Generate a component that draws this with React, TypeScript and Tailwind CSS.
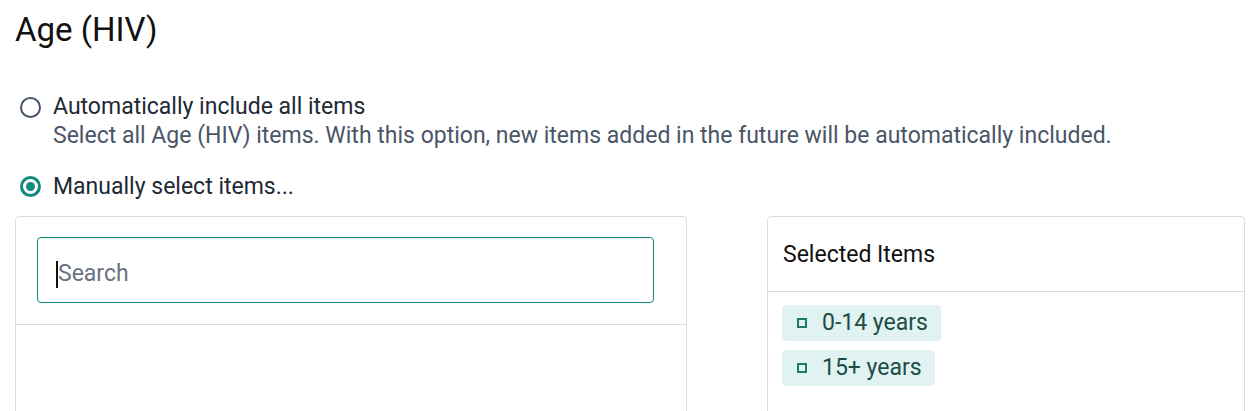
export default function App() {
  const font = { fontFamily: 'Roboto, "Liberation Sans", sans-serif' };
  return (
    <div className="bg-white min-h-screen pl-[15px] pr-[8px] text-[#1a1a1a]" style={font}>
      {/* title */}
      <h1 className="pt-[10px] text-[33px] leading-[40px] font-normal text-[#111]">Age (HIV)</h1>

      {/* options */}
      <div className="mt-[42px] pl-[5px]">
        <label className="flex items-start gap-[12px]">
          <span className="mt-[5px] w-[21px] h-[21px] rounded-full border-2 border-[#475569] bg-white shrink-0" />
          <span className="flex flex-col">
            <span className="text-[23px] leading-[29px] text-[#212934]">Automatically include all items</span>
            <span className="text-[23px] leading-[29px] text-[#4a5568]">
              Select all Age (HIV) items. With this option, new items added in the future will be automatically included.
            </span>
          </span>
        </label>
        <label className="flex items-center gap-[12px] mt-[22px]">
          <span className="w-[21px] h-[21px] rounded-full border-[3px] border-[#138a7e] flex items-center justify-center shrink-0">
            <span className="w-[9px] h-[9px] rounded-full bg-[#138a7e]" />
          </span>
          <span className="text-[23px] leading-[29px] text-[#212934]">Manually select items...</span>
        </label>
      </div>

      {/* transfer panels */}
      <div className="mt-[15px] flex gap-[80px]">
        <div className="w-[672px] shrink-0 h-[220px] border border-[#d5dde5] rounded-[4px] flex flex-col">
          <div className="pl-[21px] pr-[32px] pt-[20px] pb-[21px] border-b border-[#d5dde5]">
            <div className="h-[66px] border border-[#138a7e] rounded-[4px] flex items-center pl-[18px] pr-[13px] pt-[8px] shadow-[inset_0_1px_2px_rgba(0,0,0,0.08)]">
              <span className="w-[2px] h-[27px] bg-[#111]" />
              <input
                className="flex-1 outline-none text-[23px] text-[#1a1a1a] placeholder:text-[#6b7280] bg-transparent"
                placeholder="Search"
                style={font}
              />
            </div>
          </div>
        </div>

        <div className="w-[478px] shrink-0 h-[220px] border border-[#d5dde5] rounded-[4px] flex flex-col">
          <div className="h-[75px] px-[15px] pt-[2px] flex items-center border-b border-[#d5dde5] text-[23px] text-[#111]">
            Selected Items
          </div>
          <div className="px-[14px] pt-[13px] flex flex-col items-start gap-[9px]">
            {['0-14 years', '15+ years'].map((t) => (
              <div
                key={t}
                className="h-[36px] flex items-center gap-[15px] pl-[15px] pr-[13px] bg-[#e0f2f1] rounded-[4px] text-[23px] text-[#1b4d44]"
              >
                <span className="w-[10px] h-[10px] border-2 border-[#1f7a6b]" />
                {t}
              </div>
            ))}
          </div>
        </div>
      </div>
    </div>
  );
}
